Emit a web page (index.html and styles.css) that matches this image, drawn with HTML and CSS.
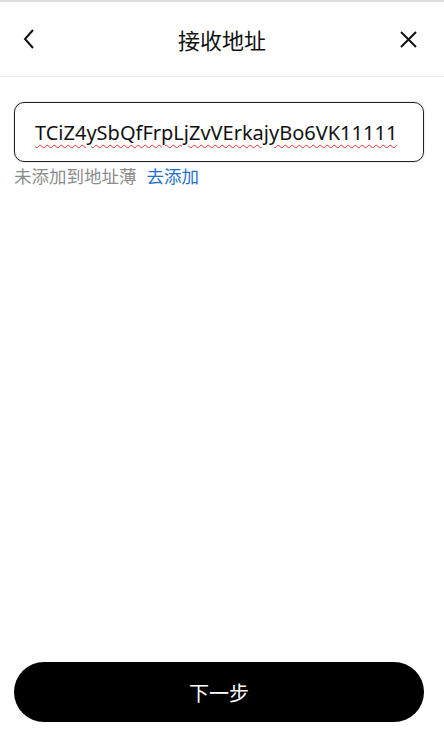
FILE: index.html
```html
<!DOCTYPE html>
<html lang="zh">
<head>
<meta charset="utf-8">
<link rel="stylesheet" href="styles.css">
</head>
<body>
<div class="page">
  <header class="header">
    <span class="icon back">
      <svg width="12" height="20" viewBox="0 0 12 20"><path d="M10 1 L2 10 L10 19" fill="none" stroke="#111" stroke-width="2"/></svg>
    </span>
    <h1 class="title">接收地址</h1>
    <span class="icon close">
      <svg width="17" height="17" viewBox="0 0 17 17"><path d="M1 1 L16 16 M16 1 L1 16" fill="none" stroke="#111" stroke-width="2"/></svg>
    </span>
  </header>
  <main class="content">
    <div class="field"><span class="addr">TCiZ4ySbQfFrpLjZvVErkajyBo6VK11111</span></div>
    <div class="hint">未添加到地址薄<a class="link">去添加</a></div>
  </main>
  <div class="footer">
    <button class="next">下一步</button>
  </div>
</div>
</body>
</html>
```
FILE: styles.css
```css
html, body { margin: 0; padding: 0; background: #fff; }
body { font-family: "Noto Sans", "Noto Sans CJK SC", sans-serif; color: #111; }
.page { height: 750px; display: flex; flex-direction: column; border-top: 2px solid #ddd; box-sizing: border-box; }
.header { height: 74px; display: flex; align-items: center; justify-content: space-between; padding: 0 27px 0 23px; border-bottom: 1px solid #eee; position: relative; }
.icon { display: flex; align-items: center; }
.title { position: absolute; left: 0; right: 0; text-align: center; margin: 0; font-size: 22px; font-weight: 400; pointer-events: none; }
.icon.back, .icon.close { z-index: 1; }
.content { flex: 1; padding: 25px 20px 0 14px; }
.field { height: 60px; border: 1px solid #222; border-radius: 10px; display: flex; align-items: center; padding: 0 20px; box-sizing: border-box; box-shadow: 0 0 2px rgba(0,0,0,0.25); }
.addr { font-size: 20px; letter-spacing: 0; text-decoration: underline wavy #e33; text-decoration-thickness: 1px; text-underline-offset: 4px; white-space: nowrap; }
.hint { margin-top: 2px; font-size: 17.5px; color: #8c8c8c; line-height: 24px; }
.link { color: #1e6fd0; margin-left: 10px; }
.footer { padding: 0 20px 28px 14px; }
.next { width: 410px; height: 60px; border: none; border-radius: 30px; background: #000; color: #fff; font-family: "Noto Sans CJK SC", sans-serif; font-size: 20px; }
```
